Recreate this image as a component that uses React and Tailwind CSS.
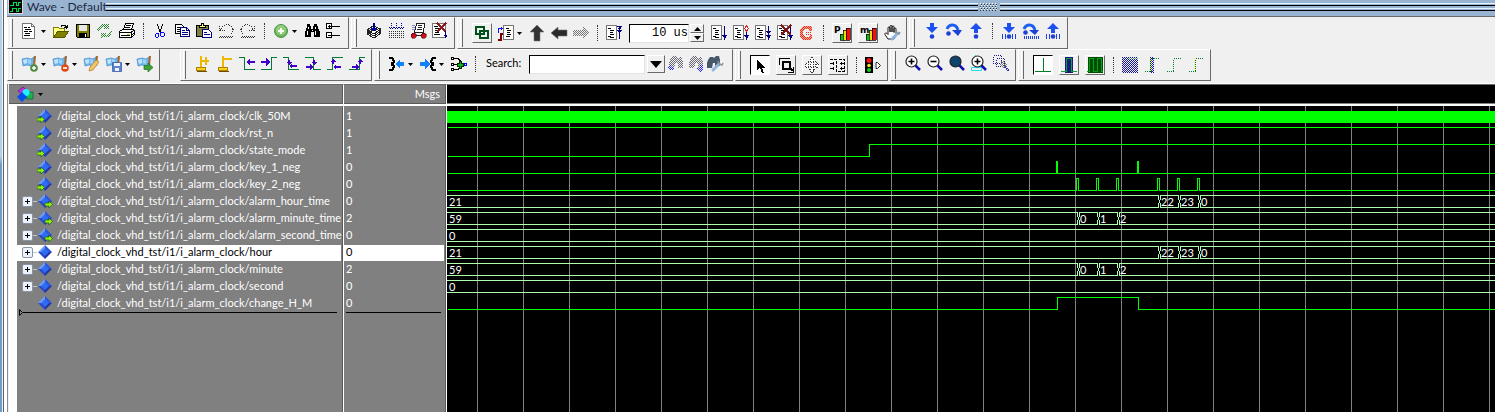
import { useState } from 'react';

/* ---------- icon primitives ---------- */

function Ico({ children, smooth = false }) {
  return (
    <svg
      className="h-4 w-4 shrink-0 overflow-visible"
      viewBox="0 0 16 16"
      fill="none"
      shapeRendering={smooth ? 'geometricPrecision' : 'crispEdges'}
      aria-hidden="true"
    >
      {children}
    </svg>
  );
}

const DITHERS = { gray: '#777777', black: '#333344', green: '#2f8a2f', red: '#e8301c', navy: '#1414a0', blue: '#2222ff' };

function DitherDefs() {
  return (
    <svg className="absolute h-0 w-0" aria-hidden="true">
      <defs>
        {Object.entries(DITHERS).map(([id, color]) => (
          <pattern key={id} id={`dither-${id}`} width="2" height="2" patternUnits="userSpaceOnUse">
            <path d="M0 0h1v1H0zM1 1h1v1H1z" fill={color} />
          </pattern>
        ))}
      </defs>
    </svg>
  );
}

const DocLines = () => (
  <>
    <path d="M.5 .5h10v14H.5z" fill="#fff" stroke="#777" />
    <path d="M2 3.5h3M4 5.5h4M4 7.5h3M4 9.5h4M2 11.5h3M4 12.5h4" stroke="#000" />
  </>
);

const DownArrow = () => <path d="M13.5 1v12M12 11.5h3M11 10.5h5M12.5 12.5h2M13.5 13v2" stroke="#000080" />;

/* standard toolbar */
const NewDoc = () => (
  <Ico>
    <path d="M.5 .5h9l3 3v12H.5z" fill="#fff" stroke="#777" />
    <path d="M9.5 .5v3h3" stroke="#777" />
    <path d="M2 4.5h3M6 4.5h2M3 6.5h6M2 8.5h4M7 8.5h3M3 10.5h5M2 12.5h6" stroke="#000" />
  </Ico>
);
const OpenFolder = () => (
  <Ico>
    <path d="M.5 14.5v-10h5l1 1h5v3" fill="#ffff80" stroke="#808000" />
    <path d="M.5 14.5l4-6h11l-4 6z" fill="#808000" stroke="#555500" />
    <path d="M8 3.5l1-1h3l1 1v2M11 4.5h4M14.5 2v3" stroke="#000" />
  </Ico>
);
const Floppy = () => (
  <Ico>
    <path d="M1.5 1.5h13v13h-12l-1-1z" fill="#808000" stroke="#000" />
    <path d="M4 2h8v6H4z" fill="#e8e8e8" />
    <path d="M4 10h8v4H4z" fill="#000" />
    <path d="M10 11h1v3h-1z" fill="#fff" />
  </Ico>
);
const RefreshOff = () => (
  <Ico>
    <path d="M0 7l4-6h5l3-1v6H6l2-2H5L2 8z" fill="url(#dither-green)" />
    <path d="M16 8l-4 6H7l-3 2v-6h6l-2 2h3l3-4z" fill="url(#dither-green)" />
  </Ico>
);
const Printer = () => (
  <Ico>
    <path d="M4.5 6.5l2-6h8l-2 6z" fill="#fff" stroke="#000" />
    <path d="M7 2.5h5M6 4.5h5" stroke="#000" />
    <path d="M.5 8.5l3-2h11l1 1v4l-3 3H.5z" fill="#fff" stroke="#000" />
    <path d="M1 9.5h11v5M2 12.5h9M12.5 9l3-2M12.5 12.5l2-2" stroke="#000" />
    <path d="M8 11h3v1H8z" fill="#c8c800" />
  </Ico>
);
const Cut = () => (
  <Ico>
    <path d="M5.5 1v2M6.5 3v3M7.5 6v3M10.5 1v2M9.5 3v3M8.5 6v3" stroke="#000" />
    <path d="M4 10.5h3M4 14.5h2M3.5 11v3M6.5 10v4M9 9.5h3M9 13.5h3M8.5 9v4M12.5 10v3" stroke="#0000ff" />
  </Ico>
);
const Copy = () => (
  <Ico>
    <path d="M1.5 1.5h6l2 2v7h-8z" fill="#fff" stroke="#000" />
    <path d="M3 4.5h3M3 6.5h4M3 8.5h4" stroke="#000" />
    <path d="M6.5 4.5h6l3 3v6h-9z" fill="#fff" stroke="#000080" />
    <path d="M12.5 4.5v3h3M8 7.5h3M8 9.5h6M8 11.5h6" stroke="#000080" />
  </Ico>
);
const Paste = () => (
  <Ico>
    <path d="M.5 2.5h12v11H.5z" fill="#808040" stroke="#000" />
    <path d="M3.5 4.5v-2h2v-2h2v2h2v2z" fill="#ffff80" stroke="#000" />
    <path d="M6.5 6.5h6l3 3v5h-9z" fill="#fff" stroke="#000080" />
    <path d="M8 9.5h3M8 11.5h6" stroke="#000080" />
  </Ico>
);
const UndoOff = () => (
  <Ico>
    <path d="M1.5 3v5M2 7.5h5M2 6.5h2M3 5.5l3-3 3-1 4 1 2 4-2 5" stroke="#333" strokeDasharray="1 1" />
    <path d="M1 14.5h14M2 13.5h13" stroke="#333" strokeDasharray="1 1" />
  </Ico>
);
const RedoOff = () => (
  <Ico>
    <path d="M14.5 3v5M9 7.5h5M12 6.5h2M13 5.5l-3-3-3-1-4 1-2 4 2 5" stroke="#333" strokeDasharray="1 1" />
    <path d="M1 14.5h14M2 13.5h13" stroke="#333" strokeDasharray="1 1" />
  </Ico>
);
const AddCircle = () => (
  <Ico smooth>
    <circle cx="8" cy="8" r="6.5" fill="#6cb65c" stroke="#4f8f48" />
    <circle cx="8" cy="7" r="5" fill="#8fcf7c" />
    <path d="M8 5v6M5 8h6" stroke="#fff" strokeWidth="2" />
  </Ico>
);
const Binoculars = () => (
  <Ico>
    <path d="M3 1h3v2h1v3h2V3h1V1h3v2h1v3h1v2h1v6h-6V9H7v5H1V8h1V5h1z" fill="#000" />
    <path d="M4.5 4v2M3.5 8v4M11.5 4v2M11.5 8v4M7.5 7h1" stroke="#fff" />
  </Ico>
);
const TreeExpand = () => (
  <Ico>
    <path d="M.5 .5h5v5h-5zM.5 9.5h5v5h-5z" fill="#fff" stroke="#000" />
    <path d="M2 3.5h3M3.5 2v3M2 12.5h3M6 3.5h8M6 12.5h8" stroke="#000" />
  </Ico>
);

/* layout toolbar */
const Stack = () => (
  <Ico>
    <path d="M1 11l6-4 8 3-7 5zM1 9l6-4 8 3-7 5zM1 7l6-4 8 3-7 5z" fill="#fff" stroke="#222" />
    <path d="M7 0h2v5h2L8 9 5 5h2z" fill="#000099" />
  </Ico>
);
const GridDown = () => (
  <Ico>
    <path d="M1 8.5h15M1 10.5h15M1 12.5h15M1 14.5h15" stroke="#333" strokeDasharray="1 1" />
    <path d="M3.5 0v5M8.5 0v5M13.5 0v5" stroke="#000099" strokeDasharray="1 1" />
    <path d="M1 4.5h5M2 5.5h3M6 4.5h5M7 5.5h3M11 4.5h5M12 5.5h3" stroke="#000099" strokeDasharray="1 1" />
  </Ico>
);
const PageWheels = () => (
  <Ico>
    <path d="M6.5 .5h8l-1 9h-9z" fill="#fff" stroke="#222" />
    <path d="M8 2.5h4M8 4.5h4M7 6.5h5" stroke="#222" />
    <path d="M1.5 2h3M1.5 4h3M1.5 6h3" stroke="#88c" />
    <path d="M2 10h3v1h1v3H5v1H2v-1H1v-3h1zM12 10h3v1h1v3h-1v1h-3v-1h-1v-3h1z" fill="#cc1020" stroke="#400" strokeWidth=".5" />
    <path d="M6 12.5h5" stroke="#222" />
  </Ico>
);
const ListDelete = () => (
  <Ico>
    <path d="M.5 .5h13v14H.5z" fill="#fff" stroke="#777" />
    <path d="M2 3.5h4M3 5.5h4M3 7.5h3M3 9.5h4M2 11.5h6" stroke="#000" />
    <path d="M5 0l9 9M14 0L5 9" stroke="#8b1a1a" strokeWidth="2" />
    <path d="M13.5 8v7M12 12.5h3M12.5 13.5h2" stroke="#000080" />
  </Ico>
);

/* run toolbar */
const Linked = () => (
  <Ico>
    <path d="M2 2h8v7H2zM6 6h8v7H6z" stroke="#00501a" strokeWidth="2" />
  </Ico>
);
const EdgeDoc = () => (
  <Ico>
    <path d="M5.5 .5h10v14h-10z" fill="#fff" stroke="#777" />
    <path d="M8 3.5h3M9 5.5h4M9 7.5h3M9 9.5h4M8 11.5h4" stroke="#000" />
    <path d="M.5 8V3.5h4M3.5 2v3" stroke="#1010ff" />
    <path d="M0 15h3V9h2" stroke="#800000" strokeWidth="2" />
  </Ico>
);
const BigUp = () => (
  <Ico smooth>
    <path d="M8 0l7 7h-4v9H5V7H1z" fill="#333" stroke="#777" strokeWidth=".6" />
  </Ico>
);
const BigLeft = () => (
  <Ico smooth>
    <path d="M0 8l7-6v3h9v6H7v3z" fill="#2a2a2a" stroke="#777" strokeWidth=".6" />
  </Ico>
);
const BigRightOff = () => (
  <Ico>
    <path d="M16 8l-6-6v3H0v6h10v3z" fill="url(#dither-gray)" />
  </Ico>
);
const DocTop = () => (
  <Ico>
    <DocLines />
    <path d="M11 1.5h5M13.5 1v13M12 3.5h3M11 5.5h5M12.5 2.5h2M12 6.5h3" stroke="#000080" />
  </Ico>
);
const DocDown = () => (
  <Ico>
    <DocLines />
    <DownArrow />
  </Ico>
);
const DocStep = () => (
  <Ico>
    <DocLines />
    <DownArrow />
    <path d="M13.5 1l2 2.5-2 2.5-2-2.5z" fill="#fff" stroke="#e02020" />
  </Ico>
);
const DocBoth = () => (
  <Ico>
    <DocLines />
    <DownArrow />
    <path d="M11 6.5h5M12 7.5h3M13 8.5h1" stroke="#000080" />
  </Ico>
);
const DocStop = () => (
  <Ico>
    <DocLines />
    <DownArrow />
    <path d="M4 0l10 10M14 0L4 10" stroke="#801818" strokeWidth="2" />
  </Ico>
);
const BreakOff = () => (
  <Ico>
    <path d="M4 1h7l2 2v3h-3V4H6L4 6v4l2 2h4l1-2h2v3l-2 2H4l-3-3V4z" fill="#f7a597" />
    <path d="M4 1h7l2 2v3h-3V4H6L4 6v4l2 2h4l1-2h2v3l-2 2H4l-3-3V4z" fill="url(#dither-red)" />
    <path d="M6.5 7.5h5M6.5 9.5h5" stroke="#e8301c" strokeDasharray="1 1" />
  </Ico>
);
function Profiler({ letter }) {
  return (
    <Ico>
      <path d="M6 9h4v6H6z" fill="#00c020" stroke="#000" strokeWidth=".7" />
      <path d="M9 5h3v10H9z" fill="#f0e000" stroke="#000" strokeWidth=".7" />
      <path d="M12 3h4v12h-4z" fill="#f01010" stroke="#000" strokeWidth=".7" />
      <text x="0" y="8" fontSize="9" fontWeight="700" fontFamily="DejaVu Sans, sans-serif" fill="#000">
        {letter}
      </text>
    </Ico>
  );
}
const Hand = () => (
  <Ico smooth>
    <path
      d="M4 14L1 9.5C.5 8 2 7.5 3 8.5l1 1V3c0-1.5 2-1.5 2 0v4V1.5C6 0 8 0 8 1.5V7 2c0-1.5 2-1.5 2 0v5.5V4c0-1.5 2-1.5 2 0v6l-2 4z"
      fill="#fff"
      stroke="#000"
      strokeWidth=".9"
    />
    <path d="M14 8l-3 3-3 3" stroke="#8fb4e0" strokeWidth="3" strokeLinecap="round" />
    <path d="M12 6l1 2 2 1 1-2" stroke="#8a949e" strokeWidth="1.5" />
  </Ico>
);

/* step toolbar */
const StepIn = () => (
  <Ico smooth>
    <path d="M6 0h4v4h4L8 10 2 4h4z" fill="#1c50f0" />
    <circle cx="8" cy="13.5" r="2.3" fill="#1c40d8" />
  </Ico>
);
const StepOut = () => (
  <Ico smooth>
    <path d="M6 10h4V6h4L8 0 2 6h4z" fill="#1c50f0" />
    <circle cx="8" cy="13.5" r="2.3" fill="#1c40d8" />
  </Ico>
);
const StepOver = () => (
  <Ico smooth>
    <path d="M1 6c2-5 9-6 11 1" stroke="#1c60f0" strokeWidth="3" />
    <path d="M6 7h10l-4 6z" fill="#1c40d8" />
    <circle cx="2.5" cy="10.5" r="2.3" fill="#1c40d8" />
  </Ico>
);
const Ticks = () => <path d="M1.5 11v5M4.5 11v5M11.5 11v5M14.5 11v5" stroke="#2040e0" />;
const StepInCur = () => (
  <Ico smooth>
    <path d="M6 0h4v4h4L8 10 2 4h4z" fill="#1c50f0" />
    <circle cx="8" cy="13.5" r="2.3" fill="#1c40d8" />
    <Ticks />
  </Ico>
);
const StepOverCur = () => (
  <Ico smooth>
    <path d="M1 6c2-5 9-6 11 1" stroke="#1c60f0" strokeWidth="3" />
    <path d="M6 7h10l-4 5z" fill="#1c40d8" />
    <circle cx="2.5" cy="9.5" r="2.3" fill="#1c40d8" />
    <path d="M1 14.5h15" stroke="#2040e0" strokeWidth="3" strokeDasharray="1 1" />
  </Ico>
);
const StepOutCur = () => (
  <Ico smooth>
    <path d="M6 10h4V6h4L8 0 2 6h4z" fill="#1c50f0" />
    <circle cx="8" cy="13.5" r="2.3" fill="#1c40d8" />
    <Ticks />
  </Ico>
);

/* bookmark toolbar */
function Flag({ badge }) {
  return (
    <Ico smooth>
      <path d="M0 3l5-1 4 1 3-2v8L9 10l-4-1-4 1z" fill="#6db8ee" stroke="#3a7fc0" strokeWidth=".6" />
      <path d="M1 4l4-1v4L2 8z" fill="#c4e4fb" />
      <path d="M6 3l3 1v4L6 7z" fill="#9fd2f6" />
      <path d="M12 0h2l-1 10h-2z" fill="#a8652c" />
      {badge}
    </Ico>
  );
}
const PlusBadge = (
  <>
    <circle cx="12" cy="12" r="3.8" fill="#4f8a3c" />
    <path d="M12 10v4M10 12h4" stroke="#fff" strokeWidth="1.4" />
  </>
);
const MinusBadge = (
  <>
    <circle cx="12" cy="12" r="3.8" fill="#dd4a14" />
    <path d="M10 12h4" stroke="#fff" strokeWidth="1.6" />
  </>
);
const PencilBadge = <path d="M5 15l1-4 6-7 3 2-6 8z" fill="#f2c46a" stroke="#b07820" strokeWidth=".7" />;
const DiskBadge = (
  <>
    <path d="M6.5 6.5h9v9h-9z" fill="#5a84d0" stroke="#3a5ca8" strokeWidth=".8" />
    <path d="M8 7h6v3H8zM9 12h4v3H9z" fill="#eef4ff" />
  </>
);
const ArrowBadge = <path d="M7 9.5h4V7l5 4.5-5 4.5v-2.5H7z" fill="#3fa03a" stroke="#1f7020" strokeWidth=".7" />;

/* cursor toolbar */
const CursorAdd = () => (
  <Ico>
    <path d="M6 0v12M6 5h8M11 1v8" stroke="#f0b800" strokeWidth="2" />
    <path d="M1.5 11.5h9v3h-9z" fill="#f8d020" stroke="#b08000" />
    <path d="M2 15.5h10" stroke="#705000" />
  </Ico>
);
const CursorDel = () => (
  <Ico>
    <path d="M6 0v12M7 3h8" stroke="#f0b800" strokeWidth="2" />
    <path d="M1.5 11.5h9v3h-9z" fill="#f8d020" stroke="#b08000" />
    <path d="M2 15.5h10" stroke="#705000" />
  </Ico>
);
function Edge({ wave, arrow }) {
  return (
    <Ico>
      <path d={wave} stroke="#007838" />
      <path d={arrow} fill="#4000c8" />
    </Ico>
  );
}
const ARROW_L = 'M7 6l4-4v3h5v2h-5v3z';
const ARROW_R = 'M9 6L5 2v3H0v2h5v3z';

/* expand toolbar */
const ExpandOut = () => (
  <Ico>
    <path d="M0 2h3l2 3v1l-3 2M2 8l3 2v1l-2 3H0" stroke="#000" strokeWidth="2" />
    <path d="M6 8l5-5v3h4v4h-4v3z" fill="#1080ff" />
  </Ico>
);
const ExpandIn = () => (
  <Ico>
    <path d="M16 2h-3l-2 3v1l3 2M14 8l-3 2v1l2 3h3" stroke="#000" strokeWidth="2" />
    <path d="M10 8L5 3v3H0v4h5v3z" fill="#1080ff" />
  </Ico>
);
const Expand3 = () => (
  <Ico>
    <path d="M3 2.5h4l2 2v7l-2 2H3M3 8.5h10" stroke="#000" />
    <path d="M.5 1.5h2v2h-2zM.5 7.5h2v2h-2zM.5 12.5h2v2h-2z" fill="#fff" stroke="#000" />
    <path d="M8 5h2v2h2v3h-2v2H8v-2H6V7h2z" fill="#10b020" stroke="#003000" />
    <path d="M13.5 7.5h2v2h-2z" fill="#fff" stroke="#0000ff" />
  </Ico>
);
function FindOff({ flip = false }) {
  return (
    <Ico>
      <path d="M5 0h4l1 2h1l1-1h3l1 5v6h-5V7H9l-2 5H2V6z" fill="url(#dither-black)" opacity=".7" />
      <path d={flip ? 'M9 12h4V9h3v4l-2 3-5-3z' : 'M0 12l4-3v2h3v3H4v2z'} fill="url(#dither-blue)" />
    </Ico>
  );
}
const FindOptions = () => (
  <Ico smooth>
    <path d="M1 4l2-3h3l1 1 2-2h3l1 4v6H8V7H6l-1 5H0V7z" fill="#46586a" />
    <path d="M12 8l-3 3-3 3" stroke="#8fb4e0" strokeWidth="3" strokeLinecap="round" />
    <path d="M11 5l1 3 3 1 1-2" stroke="#8a949e" strokeWidth="1.5" />
  </Ico>
);

/* mouse mode toolbar */
const Pointer = () => (
  <Ico>
    <path d="M5 2v11l3-2 2 5h2l-2-5h3z" fill="#000" />
  </Ico>
);
const ZoomMode = () => (
  <Ico>
    <path d="M1.5 8V1.5H12" stroke="#000" />
    <path d="M5 5h7v7H5z" stroke="#000" strokeWidth="2" />
    <path d="M12 11l3 3M15.5 10v5.5H10" stroke="#000" strokeWidth="1.5" />
  </Ico>
);
const PanMode = () => (
  <Ico>
    <path
      d="M8 .5L5 4h2v3H4V5L.5 8.5 4 11V9h3v3H5l3 3.5L11 12H9V9h3v2l3.5-2.5L12 5v2H9V4h2z"
      stroke="#333"
      strokeDasharray="1 1"
      fill="#fff"
    />
  </Ico>
);
const EditMode = () => (
  <Ico>
    <path d="M0 2.5h6.5v12H14.5M9 2.5h5.5v12" stroke="#000" strokeDasharray="3 1" />
    <path d="M0 6.5h4M0 11.5h4M10 6.5h5M10 11.5h5M3 5v3M11 5v3M3 10v3M11 10v3" stroke="#000" />
  </Ico>
);
const Traffic = () => (
  <Ico smooth>
    <path d="M0 0h8v16H0z" fill="#000" />
    <circle cx="4" cy="3.5" r="2.5" fill="#ff1010" />
    <circle cx="4" cy="8.5" r="1.8" fill="#f0e020" />
    <circle cx="4" cy="13" r="2" fill="#10d020" />
    <path d="M11 5.5h1.5l3 3-3 3H11z" fill="#fff" stroke="#222" />
    <path d="M8.5 6h2M8.5 8.5h2M8.5 11h2" stroke="#9fd8e8" />
  </Ico>
);

/* zoom toolbar */
function Lens({ fill = '#fff', sign, extra }) {
  return (
    <Ico smooth>
      {extra}
      <path d="M10 10l5 5" stroke="#1010b0" strokeWidth="2.5" />
      <circle cx="6.5" cy="6.5" r="5.5" fill={fill} stroke="#222" strokeWidth="1.2" />
      {sign && <path d={sign} stroke="#000" strokeWidth="1.6" />}
    </Ico>
  );
}
const ZoomRangeOff = () => (
  <Ico>
    <path d="M.5 .5h8v8h-8zM3.5 3.5h8v8h-8z" stroke="#1a1a80" strokeDasharray="1 1" />
    <path d="M8 6h4l2 3v3l-3 1-4-3z" fill="url(#dither-gray)" />
    <path d="M12 12l4 4" stroke="#3333aa" strokeDasharray="1 1" strokeWidth="2" />
  </Ico>
);

/* event toolbar */
const PulseThin = () => (
  <Ico>
    <path d="M0 14.5h16M8.5 1v13" stroke="#007828" />
  </Ico>
);
const PulseWide = () => (
  <Ico>
    <path d="M4 0h8v16H4z" fill="#1a1a80" />
    <path d="M0 14.5h5.5V1.5h5v13H16" stroke="#10a040" />
  </Ico>
);
const PulseFull = () => (
  <Ico>
    <path d="M1 0h15v16H1z" fill="#004d00" />
    <path d="M0 14.5h2.5v-13h4v13h4v-13h4v13H16" stroke="#00a020" />
  </Ico>
);
const BlockOff = () => (
  <Ico>
    <path d="M0 0h16v16H0z" fill="url(#dither-navy)" />
    <path d="M7 1.5h9" stroke="#40a060" strokeDasharray="1 1" />
  </Ico>
);
function RiseOff({ band = false, glow = false }) {
  return (
    <Ico>
      {glow && <path d="M6.5 1v14" stroke="#f0f040" strokeDasharray="1 1" />}
      {band && <path d="M6 0h4v16H6z" fill="url(#dither-navy)" />}
      <path d="M1 14.5h6.5M7.5 14V1.5M8 1.5h7" stroke="#008030" strokeDasharray="1 1" />
    </Ico>
  );
}

/* ---------- toolbar parts ---------- */

function ToolGroup({ label, lift = '', children }) {
  return (
    <div
      role="toolbar"
      aria-label={label}
      className="flex h-8 border border-t-white border-r-[#696969] border-b-[#696969] border-l-white pr-[3px]"
    >
      <span className="my-px mr-[6px] ml-[2px] w-[3px] border-r border-l border-r-[#696969] border-l-white" />
      <div className={`flex items-center ${lift}`}>{children}</div>
    </div>
  );
}

function Tool({ label, children }) {
  return (
    <button type="button" title={label} aria-label={label} className="flex h-5 w-[22px] items-center justify-center">
      {children}
    </button>
  );
}

function RaisedTool({ label, pressed = false, children }) {
  const look = pressed
    ? 'border-t-black border-l-black border-r-white border-b-white bg-white'
    : 'border-t-white border-l-white border-r-[#696969] border-b-[#696969]';
  return (
    <button
      type="button"
      title={label}
      aria-label={label}
      aria-pressed={pressed}
      className={`mx-[3px] flex h-5 w-5 items-center justify-center border ${look}`}
    >
      {children}
    </button>
  );
}

function Caret({ label }) {
  return (
    <button type="button" aria-label={label} className="flex h-5 w-[9px] items-center justify-start">
      <svg className="h-[3px] w-[5px]" viewBox="0 0 5 3" aria-hidden="true">
        <path d="M0 0h5L2.5 3z" fill="#000" />
      </svg>
    </button>
  );
}

const Sep = () => <span className="mx-[5px] h-4 w-px border-l border-dotted border-[#333]" />;

/* ---------- signal data ---------- */

const PATH = '/digital_clock_vhd_tst/i1/i_alarm_clock/';

const HOUR_STEPS = [
  { x: 712, text: '22' },
  { x: 732, text: '23' },
  { x: 752, text: '0' },
];
const MINUTE_STEPS = [
  { x: 631, text: '0' },
  { x: 651, text: '1' },
  { x: 671, text: '2' },
];

const SIGNALS = [
  { name: 'clk_50M', value: '1', port: 'in', kind: 'clock' },
  { name: 'rst_n', value: '1', port: 'in', kind: 'bit', start: 1, edges: [] },
  { name: 'state_mode', value: '1', port: 'in', kind: 'bit', start: 0, edges: [422] },
  { name: 'key_1_neg', value: '0', port: 'in', kind: 'bit', start: 0, edges: [609, 610, 690, 691] },
  { name: 'key_2_neg', value: '0', port: 'in', kind: 'bit', start: 0, edges: [629, 631, 649, 651, 669, 671, 710, 712, 730, 732, 750, 752] },
  { name: 'alarm_hour_time', value: '0', port: 'out', kind: 'bus', first: '21', steps: HOUR_STEPS },
  { name: 'alarm_minute_time', value: '2', port: 'out', kind: 'bus', first: '59', steps: MINUTE_STEPS },
  { name: 'alarm_second_time', value: '0', port: 'out', kind: 'bus', first: '0', steps: [] },
  { name: 'hour', value: '0', kind: 'bus', first: '21', steps: HOUR_STEPS },
  { name: 'minute', value: '2', kind: 'bus', first: '59', steps: MINUTE_STEPS },
  { name: 'second', value: '0', kind: 'bus', first: '0', steps: [] },
  { name: 'change_H_M', value: '0', kind: 'bit', start: 0, edges: [610, 691] },
];

const ROW = 17;
const END = 4000;
const GRID_LINES = Array.from({ length: 85 }, (_, i) => 30 + i * 46);

function bitPath(signal, low) {
  const high = low - 12;
  let level = signal.start;
  let d = `M1 ${level ? high : low}.5`;
  signal.edges.forEach((x) => {
    level = 1 - level;
    d += `H${x}.5V${level ? high : low}.5`;
  });
  return `${d}H${END}`;
}

function busPath(signal, top) {
  const bottom = top + 12;
  const mid = top + 6;
  let d = '';
  let from = 0;
  signal.steps.forEach(({ x }) => {
    d += `M${from} ${top}.5H${x - 1}.5V${top + 3}L${x}.5 ${mid}.5L${x - 1}.5 ${bottom - 3}V${bottom}.5H${from}`;
    d += `M${x + 2} ${top}.5H${x + 1}.5V${top + 3}L${x}.5 ${mid}.5L${x + 1}.5 ${bottom - 3}V${bottom}.5H${x + 2}`;
    from = x + 1;
  });
  return `${d}M${from} ${top}.5H${END}M${from} ${bottom}.5H${END}`;
}

function Waves() {
  return (
    <svg className="block h-full w-full" role="img" aria-label="Waveforms" shapeRendering="crispEdges">
      {GRID_LINES.map((x) => (
        <rect key={x} x={x} y="0" width="1" height="100%" fill="#808080" />
      ))}
      {SIGNALS.map((signal, i) => {
        const top = i * ROW + 4;
        if (signal.kind === 'clock') {
          return <rect key={signal.name} x="0" y={top + 1} width="100%" height="12" fill="#00ff00" />;
        }
        if (signal.kind === 'bit') {
          return <path key={signal.name} d={bitPath(signal, top + 12)} fill="none" stroke="#00ff00" />;
        }
        return (
          <g key={signal.name}>
            <path d={busPath(signal, top)} fill="none" stroke="#b0ffb0" />
            <text x="2" y={top + 11} fill="#fff" fontSize="11">
              {signal.first}
            </text>
            {signal.steps.map((step) => (
              <text key={step.x} x={step.x + 2} y={top + 11} fill="#fff" fontSize="11">
                {step.text}
              </text>
            ))}
          </g>
        );
      })}
    </svg>
  );
}

function SignalIcon({ port }) {
  return (
    <svg className="h-4 w-[17px] shrink-0" viewBox="0 0 17 16" aria-hidden="true">
      <path d="M8 1L1 8h7z" fill="#6c9cf4" />
      <path d="M8 1l7 7H8z" fill="#2c54d8" />
      <path d="M1 8l7 7V8z" fill="#2848c4" />
      <path d="M15 8l-7 7V8z" fill="#2434a0" />
      <path d="M8 4l4 4-4 4-4-4z" fill="#2f6cf4" />
      {port === 'in' && <path d="M0 10h4V8l3.5 3.5L4 15v-2H0z" fill="#8ff010" stroke="#1c6010" strokeWidth=".7" />}
      {port === 'out' && <path d="M8 10h4V8l3.5 3.5L12 15v-2H8z" fill="#8ff010" stroke="#1c6010" strokeWidth=".7" />}
    </svg>
  );
}

function SignalName({ signal, active, onSelect }) {
  return (
    <div className={`flex h-4 items-center pb-[2px] pl-1 ${active ? 'bg-white text-black' : 'text-white'}`}>
      <span className="flex w-4 items-center">
        {signal.kind === 'bus' && (
          <>
            <button
              type="button"
              aria-label={`Expand ${signal.name}`}
              className="ml-px flex h-[11px] w-[11px] shrink-0 items-center justify-center rounded-xs border border-[#8a94a8] bg-[#eef2fa]"
            >
              <svg className="h-[5px] w-[5px]" viewBox="0 0 5 5" shapeRendering="crispEdges" aria-hidden="true">
                <path d="M0 2.5h5M2.5 0v5" stroke="#000" />
              </svg>
            </button>
            <span className="h-px w-[4px] bg-[#c8c8c8]" />
          </>
        )}
      </span>
      <SignalIcon port={signal.port} />
      <button type="button" onClick={onSelect} className="ml-[3px] leading-[14px] whitespace-nowrap">
        {PATH}
        {signal.name}
      </button>
    </div>
  );
}

/* ---------- window ---------- */

function TitleBar() {
  return (
    <header className="flex h-[17px] items-start border-b border-[#696969] bg-[#99b4d1]">
      <svg className="ml-px h-[14px] w-[15px] shrink-0" viewBox="0 0 15 14" shapeRendering="crispEdges" aria-hidden="true">
        <path d="M0 0h15v14H0z" fill="#000" />
        <path d="M.5 0v13.5h14V0" fill="none" stroke="#ddd" />
        <path d="M2 5.5h3v-3h3v3h2v-3h3M2 11.5h2v-3h4v3h2v-3h3" fill="none" stroke="#00e040" />
      </svg>
      <h1 className="ml-1 w-[77px] text-[12px] leading-[14px] whitespace-nowrap text-[#1c2a44]">Wave - Default</h1>
      <div className="mt-[3px] ml-[2px] flex flex-1 items-start">
        <TitleRails className="w-[872px] shrink" />
        <svg className="h-2 w-[22px] shrink-0" viewBox="0 0 22 8" shapeRendering="crispEdges" aria-hidden="true">
          <path d="M2 .5h18M3 2.5h18M2 4.5h18M3 6.5h18" stroke="#fff" strokeDasharray="1 2" />
          <path d="M3 1.5h18M2 3.5h18M3 5.5h18M2 7.5h18" stroke="#333" strokeDasharray="1 2" />
        </svg>
        <TitleRails className="flex-1" />
      </div>
    </header>
  );
}

function TitleRails({ className }) {
  return (
    <div className={`flex flex-col gap-[2px] ${className}`}>
      <span className="h-[3px] border-t border-b border-t-[#e4f4ff] border-b-black" />
      <span className="h-[3px] border-t border-b border-t-[#e4f4ff] border-b-black" />
    </div>
  );
}

function Toolbars() {
  const [runLength, setRunLength] = useState('10 us');
  return (
    <div className="border-b border-white bg-[#f0f0f0] pb-[2px]">
      <div className="flex gap-[2px]">
        <ToolGroup label="Standard" lift="pb-1">
          <Tool label="New"><NewDoc /></Tool>
          <Caret label="New options" />
          <Tool label="Open"><OpenFolder /></Tool>
          <Tool label="Save"><Floppy /></Tool>
          <Tool label="Reload"><RefreshOff /></Tool>
          <Tool label="Print"><Printer /></Tool>
          <Sep />
          <Tool label="Cut"><Cut /></Tool>
          <Tool label="Copy"><Copy /></Tool>
          <Tool label="Paste"><Paste /></Tool>
          <Tool label="Undo"><UndoOff /></Tool>
          <Tool label="Redo"><RedoOff /></Tool>
          <Sep />
          <Tool label="Add"><AddCircle /></Tool>
          <Caret label="Add options" />
          <Tool label="Find"><Binoculars /></Tool>
          <Tool label="Expand all"><TreeExpand /></Tool>
        </ToolGroup>
        <ToolGroup label="Compile" lift="pb-1">
          <Tool label="Compile"><Stack /></Tool>
          <Tool label="Compile all"><GridDown /></Tool>
          <Tool label="Simulate"><PageWheels /></Tool>
          <Tool label="End simulation"><ListDelete /></Tool>
        </ToolGroup>
        <ToolGroup label="Simulate">
          <RaisedTool label="Link"><Linked /></RaisedTool>
          <Tool label="Trace edge"><EdgeDoc /></Tool>
          <Caret label="Trace options" />
          <Tool label="Up"><BigUp /></Tool>
          <Tool label="Back"><BigLeft /></Tool>
          <Tool label="Forward"><BigRightOff /></Tool>
          <Sep />
          <Tool label="Restart"><DocTop /></Tool>
          <input
            aria-label="Run length"
            value={runLength}
            onChange={(e) => setRunLength(e.target.value)}
            className="ml-[4px] h-[19px] w-[60px] border border-t-black border-r-[#e3e3e3] border-b-[#e3e3e3] border-l-black bg-white text-right font-['Liberation_Mono',monospace] text-[12px] text-black outline-none"
          />
          <span className="mr-[4px] ml-px flex flex-col">
            <button type="button" aria-label="Increase" className="flex h-[9px] w-[14px] items-center justify-center border border-t-white border-r-[#696969] border-b-[#696969] border-l-white">
              <svg className="h-1 w-[7px]" viewBox="0 0 7 4" aria-hidden="true"><path d="M0 4h7L3.5 0z" /></svg>
            </button>
            <button type="button" aria-label="Decrease" className="flex h-[9px] w-[14px] items-center justify-center border border-t-white border-r-[#696969] border-b-[#696969] border-l-white">
              <svg className="h-1 w-[7px]" viewBox="0 0 7 4" aria-hidden="true"><path d="M0 0h7L3.5 4z" /></svg>
            </button>
          </span>
          <Tool label="Run"><DocDown /></Tool>
          <Tool label="Continue run"><DocStep /></Tool>
          <Tool label="Run all"><DocBoth /></Tool>
          <Tool label="Break"><DocStop /></Tool>
          <Tool label="Stop"><BreakOff /></Tool>
          <Sep />
          <RaisedTool label="Performance profiling"><Profiler letter="P" /></RaisedTool>
          <RaisedTool label="Memory profiling"><Profiler letter="m" /></RaisedTool>
          <Tool label="Edit breakpoints"><Hand /></Tool>
        </ToolGroup>
        <ToolGroup label="Step" lift="pb-1">
          <Tool label="Step into"><StepIn /></Tool>
          <Tool label="Step over"><StepOver /></Tool>
          <Tool label="Step out"><StepOut /></Tool>
          <Sep />
          <Tool label="Step into current"><StepInCur /></Tool>
          <Tool label="Step over current"><StepOverCur /></Tool>
          <Tool label="Step out current"><StepOutCur /></Tool>
        </ToolGroup>
      </div>

      <div className="flex gap-[2px]">
        <ToolGroup label="Bookmarks" lift="pb-[2px]">
          <Tool label="Add bookmark"><Flag badge={PlusBadge} /></Tool>
          <Caret label="Add bookmark options" />
          <Tool label="Delete bookmark"><Flag badge={MinusBadge} /></Tool>
          <Caret label="Delete bookmark options" />
          <Tool label="Edit bookmarks"><Flag badge={PencilBadge} /></Tool>
          <Tool label="Save bookmarks"><Flag badge={DiskBadge} /></Tool>
          <Caret label="Save bookmark options" />
          <Tool label="Go to bookmark"><Flag badge={ArrowBadge} /></Tool>
        </ToolGroup>
        <span className="w-4" />
        <ToolGroup label="Cursors" lift="pb-[2px]">
          <Tool label="Insert cursor"><CursorAdd /></Tool>
          <Tool label="Delete cursor"><CursorDel /></Tool>
          <Tool label="Previous transition"><Edge wave="M0 1.5h5.5v12H16" arrow={ARROW_L} /></Tool>
          <Tool label="Next transition"><Edge wave="M0 13.5h10.5v-12H16" arrow={ARROW_R} /></Tool>
          <Tool label="Previous falling edge"><Edge wave="M0 1.5h5.5v12H16" arrow="M5 4h2v2h2L6 9 3 6h2zM6 10l3-3v2h5v2H9v2z" /></Tool>
          <Tool label="Next falling edge"><Edge wave="M0 1.5h8.5v12H16" arrow="M8 4h2v2h2L9 9 6 6h2zM8 11L5 8v2H1v2h4v2z" /></Tool>
          <Tool label="Previous rising edge"><Edge wave="M0 13.5h5.5v-12H16" arrow="M5 8h2V6h2L6 3 3 6h2zM6 11l3-3v2h5v2H9v2z" /></Tool>
          <Tool label="Next rising edge"><Edge wave="M0 13.5h10.5v-12H16" arrow="M10 8h2V6h2l-3-3-3 3h2zM10 11L7 8v2H3v2h4v2z" /></Tool>
        </ToolGroup>
        <ToolGroup label="Search" lift="pb-[2px]">
          <Tool label="Expand drivers"><ExpandOut /></Tool>
          <Caret label="Driver options" />
          <Tool label="Expand readers"><ExpandIn /></Tool>
          <Caret label="Reader options" />
          <Tool label="Expand net"><Expand3 /></Tool>
          <Sep />
          <label htmlFor="search" className="w-12 pb-[2px] pl-[5px] text-[11px] text-black">Search:</label>
          <input
            id="search"
            type="text"
            className="h-[19px] w-[116px] border border-t-black border-r-[#e3e3e3] border-b-[#e3e3e3] border-l-black bg-white px-1 text-[11px] outline-none"
          />
          <button
            type="button"
            aria-label="Search history"
            className="mx-[2px] flex h-[18px] w-[18px] items-center justify-center border border-t-white border-r-[#696969] border-b-[#696969] border-l-white"
          >
            <svg className="h-[7px] w-[12px]" viewBox="0 0 12 7" aria-hidden="true"><path d="M0 0h12L6 7z" /></svg>
          </button>
          <span className="mr-[6px] flex gap-1">
            <button type="button" aria-label="Search backward"><FindOff /></button>
            <button type="button" aria-label="Search forward"><FindOff flip /></button>
            <button type="button" aria-label="Search options"><FindOptions /></button>
          </span>
        </ToolGroup>
        <ToolGroup label="Mouse mode">
          <RaisedTool label="Select mode" pressed><Pointer /></RaisedTool>
          <RaisedTool label="Zoom mode"><ZoomMode /></RaisedTool>
          <RaisedTool label="Pan mode"><PanMode /></RaisedTool>
          <RaisedTool label="Edit mode"><EditMode /></RaisedTool>
          <Sep />
          <Tool label="Stop drawing"><Traffic /></Tool>
        </ToolGroup>
        <ToolGroup label="Zoom" lift="pb-1">
          <Tool label="Zoom in"><Lens sign="M3.5 6.5h6M6.5 3.5v6" /></Tool>
          <Tool label="Zoom out"><Lens sign="M3.5 6.5h6" /></Tool>
          <Tool label="Zoom full"><Lens fill="#0c4470" /></Tool>
          <Tool label="Zoom on cursor">
            <Lens sign="M3.5 6.5h6M6.5 3.5v6" extra={<path d="M.5 12.5h10v3H.5zM4.5 0v12" stroke="#20e0f0" />} />
          </Tool>
          <Tool label="Zoom range"><ZoomRangeOff /></Tool>
        </ToolGroup>
        <ToolGroup label="Event traceback">
          <RaisedTool label="Show pulse" pressed><PulseThin /></RaisedTool>
          <RaisedTool label="Show delta"><PulseWide /></RaisedTool>
          <RaisedTool label="Show all deltas"><PulseFull /></RaisedTool>
          <Sep />
          <Tool label="Expand time"><BlockOff /></Tool>
          <Tool label="Expand at cursor"><RiseOff band glow /></Tool>
          <Tool label="Collapse time"><RiseOff /></Tool>
          <Tool label="Collapse at cursor"><RiseOff glow /></Tool>
        </ToolGroup>
      </div>
    </div>
  );
}

const HEAD = 'h-[22px] border-t border-b-2 border-t-[#696969] border-b-white p-0 font-normal';
const SPLIT = 'border-r border-r-white shadow-[inset_-1px_0_#5a5a5a]';

function WaveTable() {
  const [selected, setSelected] = useState('hour');
  return (
    <table className="h-full w-full table-fixed border-separate border-spacing-0 text-[11px]">
      <colgroup>
        <col className="w-[335px]" />
        <col className="w-[103px]" />
        <col />
      </colgroup>
      <thead>
        <tr>
          <th scope="col" aria-label="Signal" className={`${HEAD} ${SPLIT} bg-[#808080]`}>
            <div className="flex h-[19px] items-center border-b border-[#5a5a5a] pl-2">
              <button type="button" aria-label="Signal filter" className="flex items-center gap-1">
                <svg className="h-4 w-[17px]" viewBox="0 0 17 16" aria-hidden="true">
                  <path d="M1 5l5-4 5 4-5 4z" fill="#c030e0" stroke="#601080" strokeWidth=".7" />
                  <path d="M9 6h7v7H9z" fill="#20b050" stroke="#106030" strokeWidth=".7" />
                  <circle cx="9" cy="6.5" r="3.5" fill="#20f0ff" />
                  <path d="M5 6l5 5-5 5-5-5z" fill="#0050f0" />
                </svg>
                <svg className="h-[3px] w-[5px]" viewBox="0 0 5 3" aria-hidden="true"><path d="M0 0h5L2.5 3z" /></svg>
              </button>
            </div>
          </th>
          <th scope="col" className={`${HEAD} ${SPLIT} bg-[#808080] text-right text-white`}>
            <div className="h-[19px] border-b border-[#5a5a5a] pr-[6px] leading-[18px]">Msgs</div>
          </th>
          <th scope="col" aria-label="Waveform" className={`${HEAD} bg-black`}>
            <div className="h-[19px] border-b border-[#808080]" />
          </th>
        </tr>
      </thead>
      <tbody>
        <tr className="h-[2px]">
          <td className={`border-l-8 border-l-white bg-[#808080] p-0 ${SPLIT}`} />
          <td className={`bg-[#808080] p-0 ${SPLIT}`} />
          <td rowSpan={SIGNALS.length + 2} className="bg-black p-0">
            <Waves />
          </td>
        </tr>
        {SIGNALS.map((signal) => {
          const active = signal.name === selected;
          return (
            <tr key={signal.name} className="h-[17px]">
              <td className={`border-l-8 border-l-white bg-[#808080] p-0 pr-[2px] align-bottom ${SPLIT}`}>
                <SignalName signal={signal} active={active} onSelect={() => setSelected(signal.name)} />
              </td>
              <td className={`bg-[#808080] p-0 pr-[2px] align-bottom ${SPLIT}`}>
                <div className={`h-4 pl-[2px] leading-[14px] ${active ? 'bg-white text-black' : 'text-white'}`}>{signal.value}</div>
              </td>
            </tr>
          );
        })}
        <tr>
          <td className={`border-l-8 border-l-white bg-[#808080] p-0 align-top ${SPLIT}`}>
            {/* insertion mark */}
            <div className="-mt-[3px] mr-[6px] ml-[2px] flex items-center">
              <svg className="h-[7px] w-1 shrink-0" viewBox="0 0 4 7" aria-hidden="true">
                <path d="M.5 .5v6l3-3z" fill="none" stroke="#000" />
              </svg>
              <span className="h-px flex-1 bg-black" />
            </div>
          </td>
          <td className={`bg-[#808080] p-0 align-top ${SPLIT}`}>
            <div className="mr-[5px] ml-[2px] h-px bg-black" />
          </td>
        </tr>
      </tbody>
    </table>
  );
}

export default function App() {
  return (
    <div className="flex h-screen overflow-hidden bg-[#f0f0f0] font-[Lato,sans-serif]">
      <DitherDefs />
      <div className="flex w-[7px] shrink-0">
        <div className="w-[2px] bg-linear-to-b from-[#b4cfe6] from-38% to-[#6c9cc8] to-40%" />
        <div className="w-px bg-[#e8f2fa]" />
        <div className="w-px bg-[#606060]" />
        <div className="w-[3px] bg-white" />
      </div>
      <div className="flex min-w-0 flex-1 flex-col">
        <TitleBar />
        <Toolbars />
        <main className="min-h-0 flex-1 border-l border-[#8a8a8a] pl-px">
          <WaveTable />
        </main>
      </div>
    </div>
  );
}
